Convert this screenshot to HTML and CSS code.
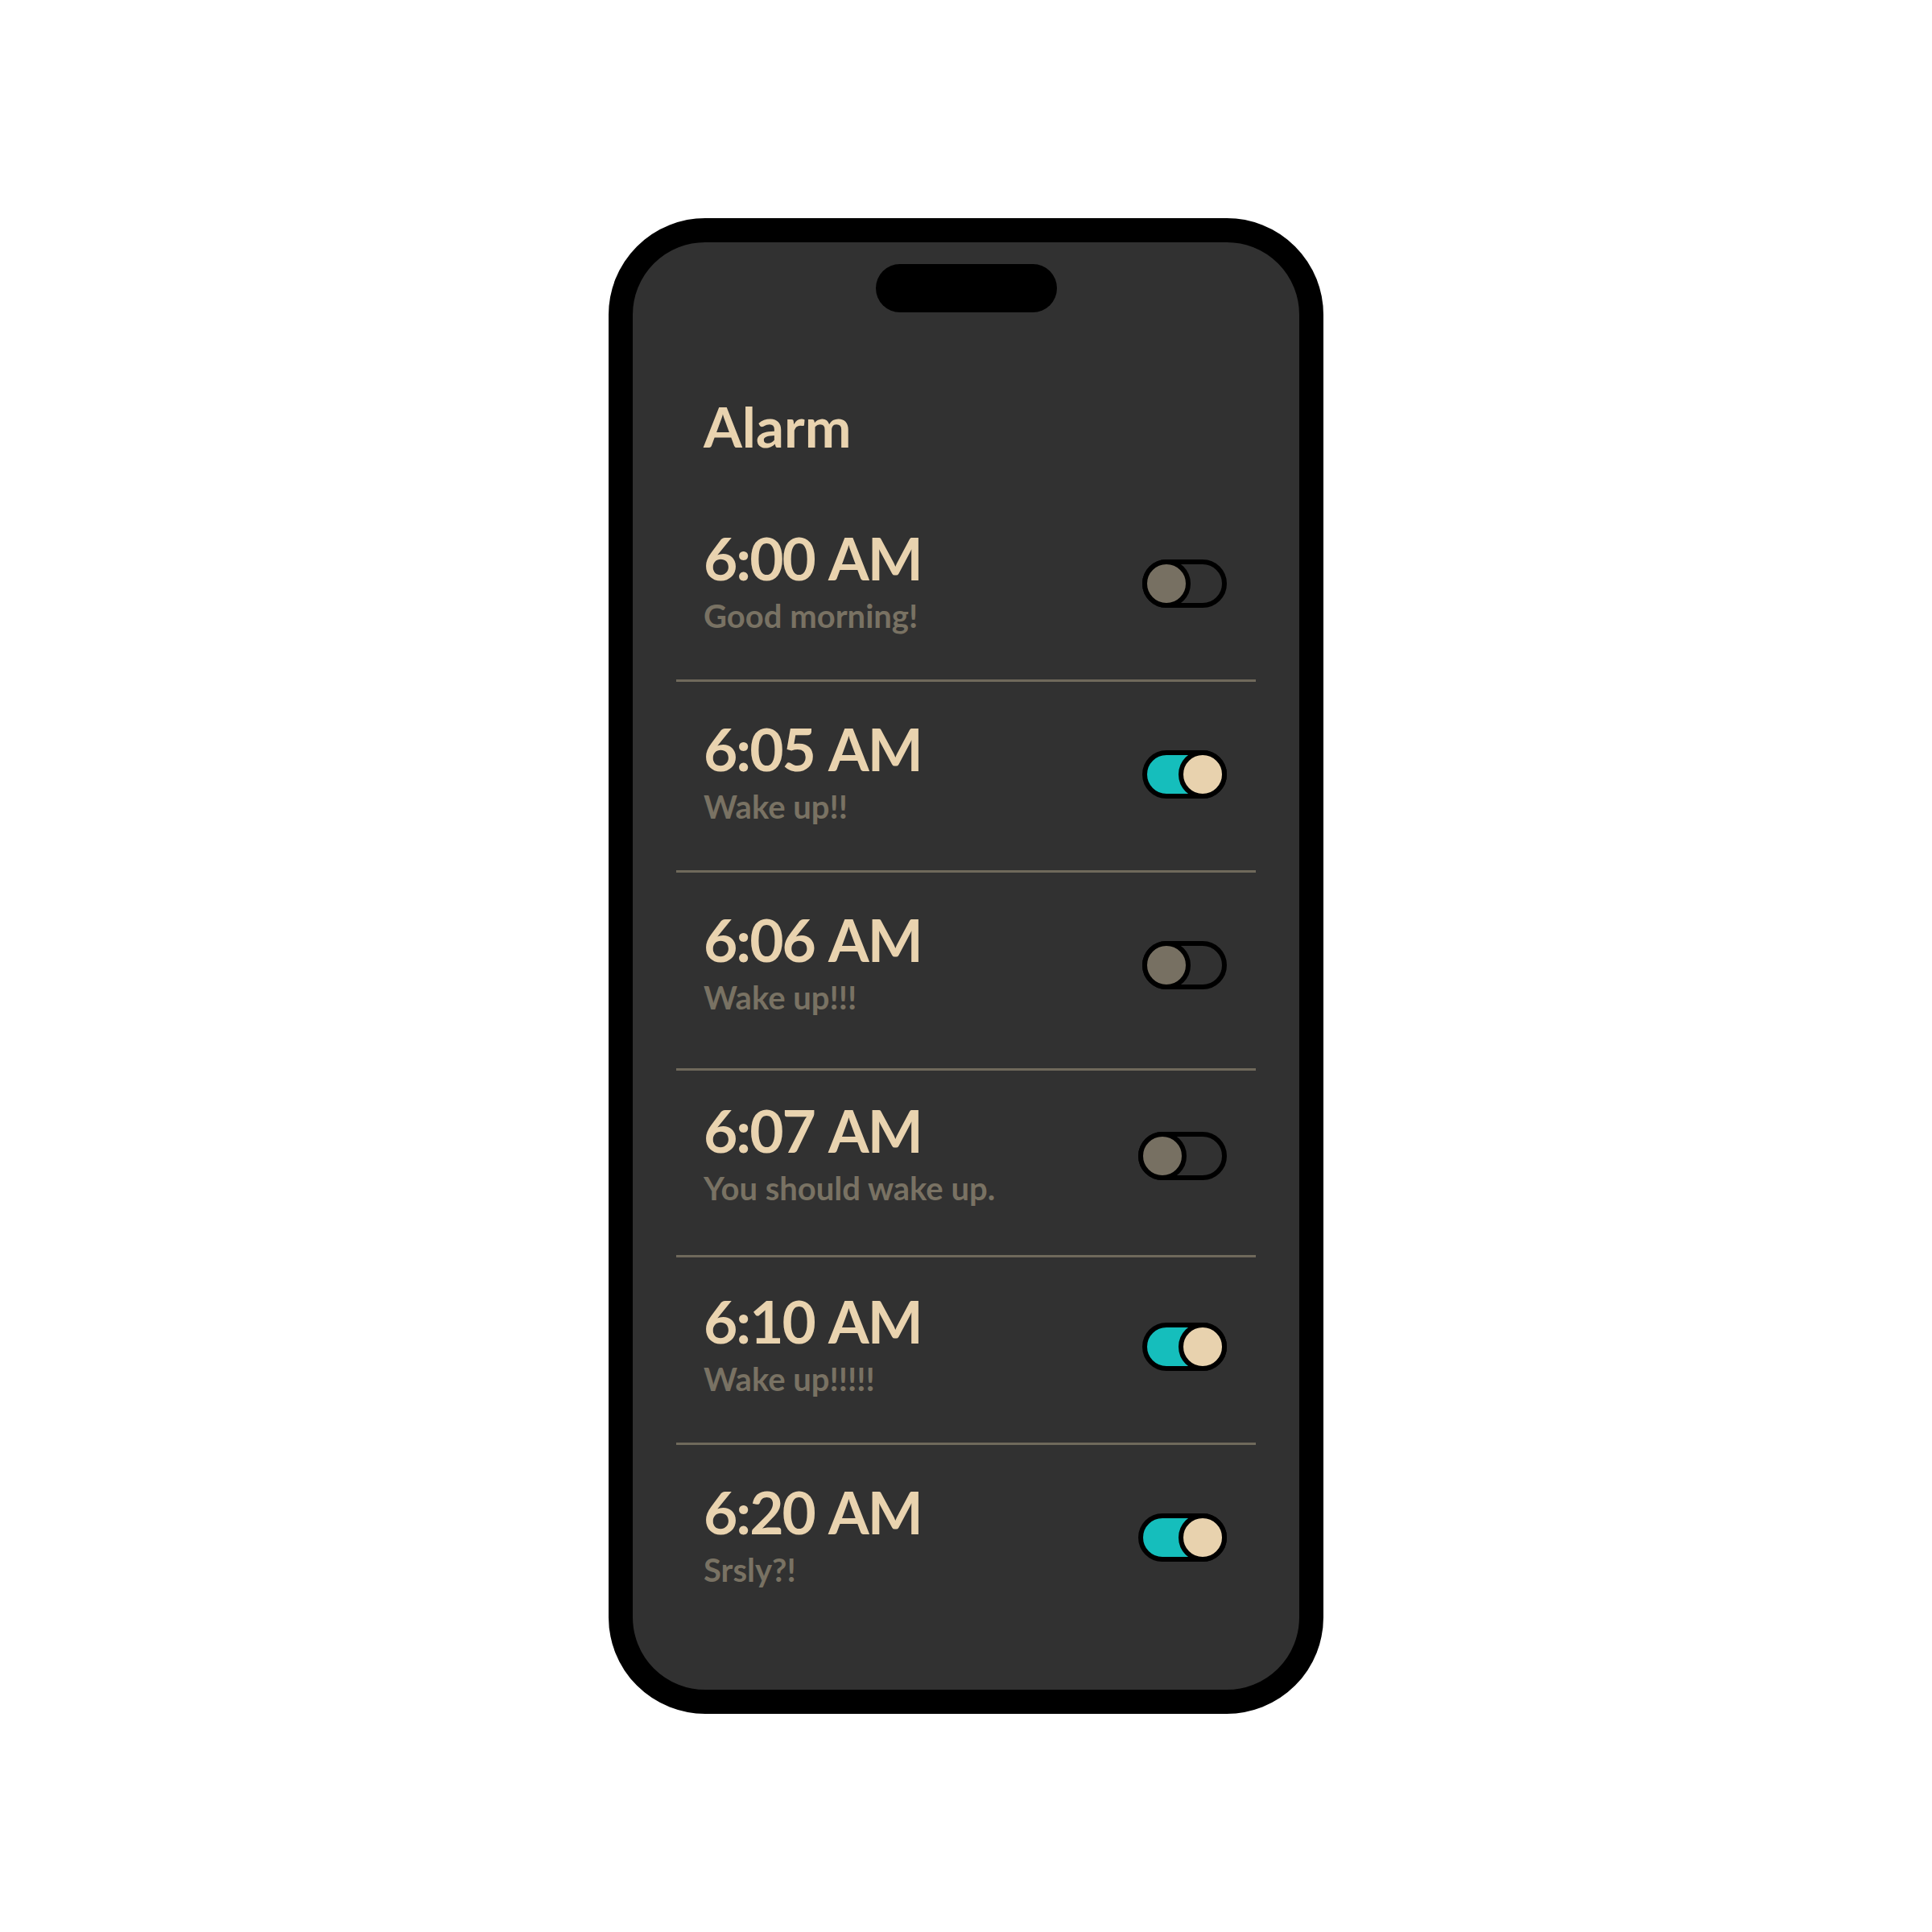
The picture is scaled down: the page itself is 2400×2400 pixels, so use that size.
FILE: index.html
```html
<!DOCTYPE html>
<html lang="en">
<head>
<meta charset="utf-8">
<title>Alarm</title>
<link rel="stylesheet" href="styles.css">
</head>
<body>
<div class="phone">
  <div class="notch"></div>
  <h1 class="title">Alarm</h1>
  <ul class="alarms">
    <li class="alarm">
      <div class="info"><div class="time">6:00 AM</div><div class="label">Good morning!</div></div>
      <div class="toggle"><span class="knob"></span></div>
    </li>
    <li class="alarm">
      <div class="info"><div class="time">6:05 AM</div><div class="label">Wake up!!</div></div>
      <div class="toggle on"><span class="knob"></span></div>
    </li>
    <li class="alarm">
      <div class="info"><div class="time">6:06 AM</div><div class="label">Wake up!!!</div></div>
      <div class="toggle"><span class="knob"></span></div>
    </li>
    <li class="alarm">
      <div class="info"><div class="time">6:07 AM</div><div class="label">You should wake up.</div></div>
      <div class="toggle wide"><span class="knob"></span></div>
    </li>
    <li class="alarm">
      <div class="info"><div class="time">6:10 AM</div><div class="label">Wake up!!!!!</div></div>
      <div class="toggle on"><span class="knob"></span></div>
    </li>
    <li class="alarm">
      <div class="info"><div class="time">6:20 AM</div><div class="label">Srsly?!</div></div>
      <div class="toggle on wide"><span class="knob"></span></div>
    </li>
  </ul>
</div>
</body>
</html>
```

FILE: styles.css
```css
html, body {
  margin: 0;
  padding: 0;
}
body {
  width: 2400px;
  height: 2400px;
  background: #ffffff;
  display: flex;
  align-items: center;
  justify-content: center;
  font-family: Lato, "Noto Sans", sans-serif;
}
.phone {
  box-sizing: border-box;
  width: 888px;
  height: 1858px;
  border: 30px solid #000;
  border-radius: 120px;
  background: #313131;
  display: flex;
  flex-direction: column;
}
.notch {
  width: 225px;
  height: 60px;
  border-radius: 30px;
  background: #000;
  margin: 27px auto 0;
  flex: none;
}
.title {
  margin: 107px 0 0 88px;
  font-size: 69px;
  line-height: 69px;
  font-weight: 700;
  color: #e9d3af;
}
.alarms {
  list-style: none;
  margin: 46px 54px 0;
  padding: 0;
}
.alarm {
  display: flex;
  align-items: center;
  justify-content: space-between;
  padding: 46px 36px 50px 34px;
  border-bottom: 3px solid #6f695b;
}
.alarm:nth-child(3) {
  padding-bottom: 59px;
}
.alarm:nth-child(4) {
  padding-top: 37px;
  padding-bottom: 54px;
}
.alarm:nth-child(5) {
  padding-top: 42px;
}
.alarm:last-child {
  border-bottom: none;
}
.time {
  font-size: 73px;
  line-height: 74px;
  font-weight: 700;
  letter-spacing: -2px;
  word-spacing: 4px;
  color: #e9d3af;
}
.label {
  margin-top: 6px;
  font-size: 40px;
  line-height: 58px;
  font-weight: 700;
  color: #797263;
}
.toggle {
  position: relative;
  box-sizing: border-box;
  width: 105px;
  height: 60px;
  border: 6px solid #000;
  border-radius: 30px;
  background: #313131;
  flex: none;
}
.toggle.wide {
  width: 110px;
}
.knob {
  position: absolute;
  top: -6px;
  left: -6px;
  box-sizing: border-box;
  width: 60px;
  height: 60px;
  border: 6px solid #000;
  border-radius: 50%;
  background: #777062;
}
.toggle.on {
  background: #15bebc;
}
.toggle.on .knob {
  left: auto;
  right: -6px;
  background: #e8d2ae;
}
```
